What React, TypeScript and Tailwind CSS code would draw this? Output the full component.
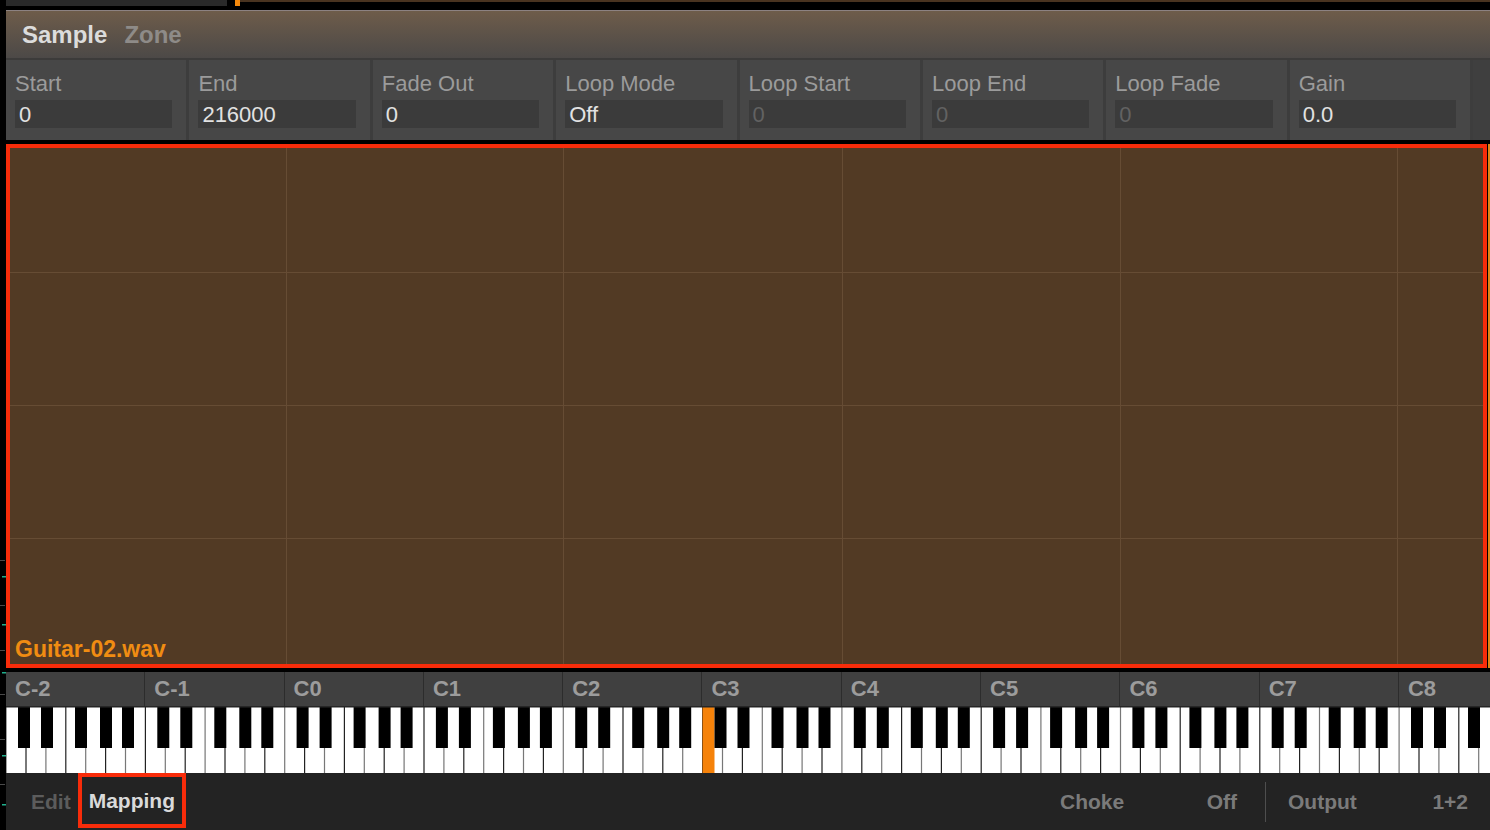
import React from "react";

const FONT = { fontFamily: '"Liberation Sans", Arial, sans-serif' };

const params = [
  { label: "Start", value: "0", on: true },
  { label: "End", value: "216000", on: true },
  { label: "Fade Out", value: "0", on: true },
  { label: "Loop Mode", value: "Off", on: true },
  { label: "Loop Start", value: "0", on: false },
  { label: "Loop End", value: "0", on: false },
  { label: "Loop Fade", value: "0", on: false },
  { label: "Gain", value: "0.0", on: true },
];

const octaves = ["C-2", "C-1", "C0", "C1", "C2", "C3", "C4", "C5", "C6", "C7"];

const ticks: { y: number; teal: boolean }[] = [
  { y: 560, teal: false },
  { y: 576, teal: true },
  { y: 605, teal: false },
  { y: 624, teal: true },
  { y: 650, teal: false },
  { y: 672, teal: true },
  { y: 694, teal: false },
  { y: 739, teal: false },
  { y: 755, teal: true },
  { y: 784, teal: false },
  { y: 804, teal: true },
];

function Ruler() {
  return (
    <svg width="6" height="830" className="block">
      <rect width="6" height="830" fill="#000" />
      {ticks.map((t, i) =>
        t.teal ? (
          <rect key={i} x="2" y={t.y} width="4" height="1.5" fill="#1fae8c" />
        ) : (
          <rect key={i} x="0" y={t.y} width="5" height="1" fill="#4a4a4a" />
        )
      )}
    </svg>
  );
}

function Keyboard() {
  const oct = 139.3;
  const ww = oct / 7;
  const blackOffsets = [12, 35, 69, 94, 116];
  const whites = Array.from({ length: 76 }, (_, i) => i);
  return (
    <svg width="1484" height="67" className="block">
      <rect width="1484" height="67" fill="#fff" />
      {whites.map((i) => (
        <rect key={"w" + i} x={i * ww - 0.5} y="0" width="1.2" height="67" fill={i % 2 ? "#222" : "#777"} />
      ))}
      <rect x="696.5" y="0" width="12" height="67" fill="#f5820a" />
      {Array.from({ length: 11 }, (_, o) =>
        blackOffsets.map((b, j) => (
          <rect key={"b" + o + "-" + j} x={o * oct + b} y="0" width="12" height="42" fill="#000" />
        ))
      )}
      <rect width="1484" height="1.5" fill="#262626" />
    </svg>
  );
}

export default function App() {
  return (
    <div className="flex w-[1490px] h-[830px] overflow-hidden bg-black" style={FONT}>
      <Ruler />
      <div className="flex flex-col flex-1 min-w-0">
        {/* top strip */}
        <div className="flex h-[10px] bg-black">
          <div className="w-[221px] h-[6px] bg-[#2a2a2a]" />
          <div className="ml-[8px] w-[5px] h-[6px] bg-[#f5890c]" />
          <div className="flex-1 h-[2px] bg-[#4a3420]" />
        </div>

        {/* header */}
        <div className="h-[50px] flex items-center gap-[17px] pl-[16px] border-t border-[#8c8282] border-b-2 border-b-[#3c3b3a] bg-gradient-to-b from-[#6e5c4a] to-[#4c4947]">
          <span className="text-[24px] font-bold text-[#dcdcdc]">Sample</span>
          <span className="text-[24px] font-bold text-[#8e8b88]">Zone</span>
        </div>

        {/* parameters */}
        <div className="h-[80px] flex gap-[3px] bg-[#3d3d3d]">
          {params.map((p) => (
            <div key={p.label} className="w-[180.4px] bg-[#474747] pl-[9px] pr-[14px] pt-[11px]">
              <div className="text-[22px] leading-[26px] text-[#9b9b9b]">{p.label}</div>
              <div
                className={
                  "mt-[3px] h-[28px] bg-[#3b3b3b] pl-[4px] text-[22px] leading-[29px] " +
                  (p.on ? "text-[#e2e2e2]" : "text-[#626262]")
                }
              >
                {p.value}
              </div>
            </div>
          ))}
          <div className="flex-1 bg-[#3f3f3f]" />
        </div>

        <div className="h-[4px] bg-black" />

        {/* mapping area */}
        <div className="flex h-[524px]">
          <div className="relative flex-1 border-4 border-[#f82c0a] bg-[#523a24]">
            <div className="grid h-full grid-cols-[277px_277px_279px_278px_277px_1fr] grid-rows-[125px_133px_133px_1fr]">
              {Array.from({ length: 24 }, (_, i) => (
                <div
                  key={i}
                  className={
                    (i % 6 !== 5 ? "border-r " : "") + (i < 18 ? "border-b " : "") + "border-[#664c34]"
                  }
                />
              ))}
            </div>
            <span className="absolute left-[5px] bottom-[0px] text-[23px] leading-[30px] font-bold text-[#f08c12]">
              Guitar-02.wav
            </span>
          </div>
          <div className="w-[1px] bg-black" />
          <div className="w-[2px] bg-[#e08414]" />
        </div>

        <div className="h-[4px] bg-black" />

        {/* octave labels */}
        <div className="h-[34px] flex bg-[#404040]">
          {octaves.map((o) => (
            <div
              key={o}
              className="w-[139.3px] shrink-0 flex items-center pl-[9px] pb-[2px] border-r border-[#2c2c2c] text-[22px] font-bold text-[#9c9c9c]"
            >
              {o}
            </div>
          ))}
          <div className="flex-1 flex items-center pl-[9px] pb-[2px] text-[22px] font-bold text-[#9c9c9c]">C8</div>
        </div>

        <Keyboard />

        {/* bottom bar */}
        <div className="flex-1 flex items-center bg-[#232323] pl-[25px] pr-[22px]">
          <span className="text-[21px] font-bold text-[#5c5c5c]">Edit</span>
          <div className="ml-[7px] h-[55px] self-start flex items-center px-[7px] border-4 border-[#f82c0a]">
            <span className="text-[21px] font-bold text-[#dadada]">Mapping</span>
          </div>
          <div className="flex-1" />
          <div className="w-[177px] flex justify-between text-[21px] font-bold text-[#7a7a7a]">
            <span>Choke</span>
            <span>Off</span>
          </div>
          <div className="ml-[28px] w-px h-[40px] bg-[#4e4e4e]" />
          <div className="ml-[22px] w-[180px] flex justify-between text-[21px] font-bold text-[#7a7a7a]">
            <span>Output</span>
            <span>1+2</span>
          </div>
        </div>
      </div>
    </div>
  );
}
